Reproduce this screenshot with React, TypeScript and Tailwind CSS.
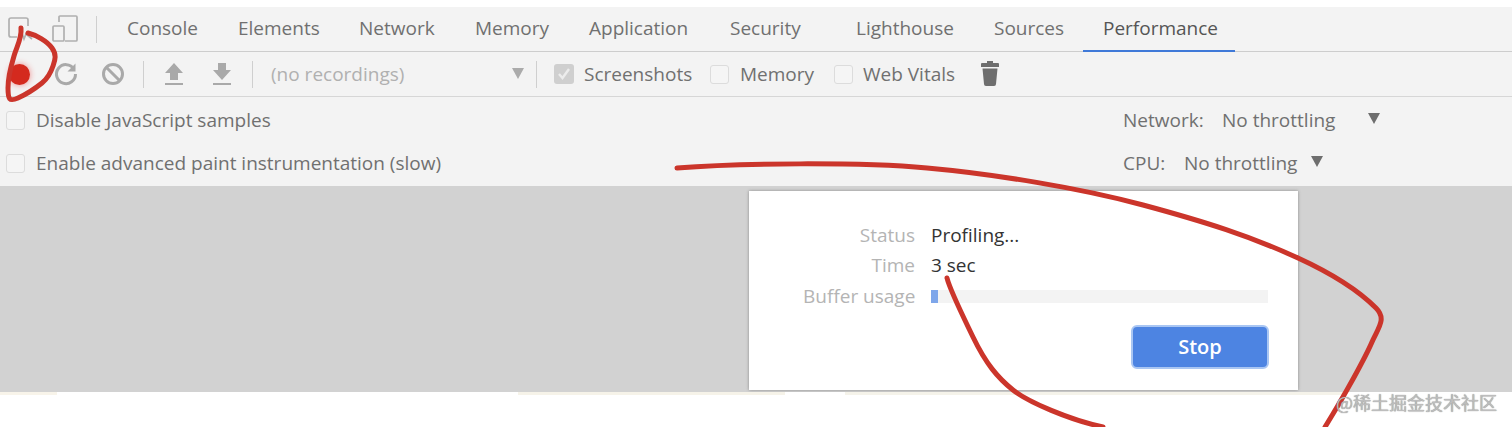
const tabs = [
  { name: "Console", width: "w-[111px]" },
  { name: "Elements", width: "w-[121px]" },
  { name: "Network", width: "w-[116px]" },
  { name: "Memory", width: "w-[114px]" },
  { name: "Application", width: "w-[141px]" },
  { name: "Security", width: "w-[126px]" },
  { name: "Lighthouse", width: "w-[138px]" },
  { name: "Sources", width: "w-[109px]" },
];

function Checkbox() {
  return <span className="block h-[19px] w-[19px] shrink-0 rounded-[3px] border border-[#dcdcdc] bg-[#f5f5f5]" />;
}

function Caret({ className, color = "#6e6e6e" }: { className: string; color?: string }) {
  return (
    <svg width="14" height="11" viewBox="0 0 14 11" className={className}>
      <path d="M1 0h12L7 11z" fill={color} />
    </svg>
  );
}

function Divider({ className }: { className: string }) {
  return <span className={`block h-[27px] w-px shrink-0 bg-[#cfcfcf] ${className}`} />;
}

export default function App() {
  return (
    <div className="relative h-[427px] w-[1512px] overflow-hidden whitespace-nowrap bg-white font-['Open_Sans','Noto_Sans',sans-serif] text-[19px] text-[#707070]">
      <div className="h-[7px] bg-white" />

      {/* Tab bar */}
      <div className="flex h-[45px] items-stretch border-b border-[#cdcdcd] bg-[#f3f3f3]">
        <div className="flex w-[107px] shrink-0 items-center">
          <svg width="30" height="30" viewBox="0 0 30 30" className="ml-[6px]" fill="none" stroke="#b0b0b0" strokeWidth="1.7">
            <path d="M11 23H5a2 2 0 0 1-2-2V6a2 2 0 0 1 2-2h15a2 2 0 0 1 2 2v6" />
            <path d="M14 13l4 12 2-5 6 5" />
          </svg>
          <svg width="30" height="30" viewBox="0 0 30 30" className="ml-[15px]" fill="none" stroke="#b0b0b0" strokeWidth="1.7">
            <path d="M8 8V3a1 1 0 0 1 1-1h16a1 1 0 0 1 1 1v23a1 1 0 0 1-1 1H14" />
            <rect x="2" y="12" width="11" height="15" rx="1" />
          </svg>
          <Divider className="ml-[15px]" />
        </div>
        {tabs.map((tab) => (
          <div key={tab.name} className={`flex shrink-0 items-center pb-[2px] pl-5 ${tab.width}`}>
            {tab.name}
          </div>
        ))}
        <div className="relative -mb-px flex w-[152px] shrink-0 items-center border-b-2 border-[#3f79d8] pl-5 text-[#555555]">
          Performance
        </div>
      </div>

      {/* Recording toolbar */}
      <div className="flex h-[45px] items-center border-b border-[#d6d6d6] bg-[#f3f3f3]">
        <span className="ml-[9px] block h-[21px] w-[21px] shrink-0 rounded-full bg-[#d42a1e] shadow-[0_0_6px_#e88]" />
        <svg width="26" height="26" viewBox="0 0 26 26" className="ml-[23px] shrink-0" fill="none" stroke="#a9a9a9" strokeWidth="3">
          <path d="M21 8a9.5 9.5 0 1 0 1.5 5" />
          <path d="M22.5 2.5v8h-8" fill="#a9a9a9" stroke="none" />
        </svg>
        <svg width="24" height="24" viewBox="0 0 24 24" className="ml-[22px] shrink-0" fill="none" stroke="#a9a9a9" strokeWidth="3">
          <circle cx="12" cy="12" r="9.5" />
          <path d="M5.5 5.5l13 13" />
        </svg>
        <Divider className="ml-[18px]" />
        <svg width="20" height="24" viewBox="0 0 20 24" className="ml-[20px] shrink-0" fill="#a9a9a9">
          <path d="M10 1l9 10h-5v7H6v-7H1z" />
          <path d="M1 21h18v2H1z" />
        </svg>
        <svg width="20" height="24" viewBox="0 0 20 24" className="ml-[28px] shrink-0" fill="#a9a9a9">
          <path d="M6 1h8v7h5l-9 10L1 8h5z" />
          <path d="M1 21h18v2H1z" />
        </svg>
        <Divider className="ml-[20px]" />
        <span className="ml-[18px] w-[240px] shrink-0 text-[#b0b0b0]">(no recordings)</span>
        <Caret className="shrink-0 -translate-y-px" color="#ababab" />
        <Divider className="ml-[11px]" />
        <span className="ml-[17px] flex h-[20px] w-[20px] shrink-0 items-center justify-center rounded-[3px] bg-[#cfcfcf]">
          <svg width="14" height="14" viewBox="0 0 14 14" fill="none" stroke="#ececec" strokeWidth="2.4">
            <path d="M2 7l3.5 4L12 2" />
          </svg>
        </span>
        <span className="ml-[10px] w-[107px] shrink-0">Screenshots</span>
        <span className="ml-[19px] shrink-0"><Checkbox /></span>
        <span className="ml-[11px] w-[75px] shrink-0">Memory</span>
        <span className="ml-[19px] shrink-0"><Checkbox /></span>
        <span className="ml-[10px] w-[94px] shrink-0">Web Vitals</span>
        <svg width="18" height="25" viewBox="0 0 18 25" className="ml-[24px] shrink-0 -translate-y-px" fill="#6e6e6e">
          <path d="M6 0h6v2h5a1 1 0 0 1 1 1v3H0V3a1 1 0 0 1 1-1h5z" />
          <path d="M1.5 7.5h15L15 23a2 2 0 0 1-2 2H5a2 2 0 0 1-2-2z" />
        </svg>
      </div>

      {/* Capture settings */}
      <div className="flex h-[89px] flex-col bg-[#f3f3f3]">
        <div className="flex h-[46px] shrink-0 items-center pl-[6px]">
          <Checkbox />
          <span className="ml-[11px] w-[1087px] shrink-0">Disable JavaScript samples</span>
          <span className="w-[99px] shrink-0">Network:</span>
          <span className="w-[145px] shrink-0">No throttling</span>
          <Caret className="shrink-0 -translate-y-0.5" />
        </div>
        <div className="flex h-[41px] shrink-0 items-center pl-[6px]">
          <Checkbox />
          <span className="ml-[11px] w-[1087px] shrink-0">Enable advanced paint instrumentation (slow)</span>
          <span className="w-[61px] shrink-0">CPU:</span>
          <span className="w-[126px] shrink-0">No throttling</span>
          <Caret className="shrink-0 -translate-y-0.5" />
        </div>
      </div>

      {/* Profiling status */}
      <div className="h-[206px] bg-[#d2d2d2] pl-[749px] pt-[5px]">
        <div className="h-[199px] w-[549px] bg-white pl-[54px] pt-[29px] shadow-[0_0_3px_#8a8a8a]">
          <div className="flex h-[30px] items-center">
            <span className="w-[112px] shrink-0 text-right text-[#b4b4b4]">Status</span>
            <span className="ml-4 text-[#333333]">Profiling...</span>
          </div>
          <div className="flex h-[31px] items-center">
            <span className="w-[112px] shrink-0 text-right text-[#b4b4b4]">Time</span>
            <span className="ml-4 text-[#333333]">3 sec</span>
          </div>
          <div className="flex h-[30px] items-center">
            <span className="w-[112px] shrink-0 text-right text-[#b4b4b4]">Buffer usage</span>
            <div className="ml-4 h-[13px] w-[337px] bg-[#f3f3f3]">
              <div className="h-full w-[7px] bg-[#7ea6ea]" />
            </div>
          </div>
          <div className="mt-[14px] flex justify-end pr-[29px]">
            <button className="flex h-[44px] w-[138px] items-center justify-center rounded-[6px] border-2 border-[#a9c6f3] bg-[#4d84e2] text-[20px] font-semibold text-white">
              Stop
            </button>
          </div>
        </div>
      </div>

      {/* Page peeking out below the panel */}
      <div className="flex h-[3px]">
        <span className="w-[57px] bg-[#f8f4ea]" />
        <span className="w-[461px] bg-white" />
        <span className="w-[267px] bg-[#f6f3e9]" />
        <span className="w-[60px] bg-white" />
        <span className="w-[500px] bg-[#f5f3ea]" />
      </div>

      {/* Hand-drawn annotations */}
      <svg width="1512" height="427" viewBox="0 0 1512 427" className="pointer-events-none absolute inset-0" fill="none" stroke="#cb352b" strokeLinecap="round" strokeLinejoin="round" strokeWidth="5">
        <path d="M28 33C36 35 47 41 52 48S55 60 53 66S47 79 42 83S27 94 18 98S8 99 8 88S11 66 14 56S22 38 21 28" />
        <path d="M677 168C740 163 860 162 927 168S1080 188 1143 205S1250 236 1298 258S1365 297 1376 308S1378 328 1372 342S1345 395 1325 427" />
        <path d="M947 278C950 290 960 310 973 337S998 378 1013 390S1070 420 1103 427" />
      </svg>

      {/* Watermark */}
      <span className="absolute left-[1336px] top-[389px] font-['Noto_Sans_CJK_SC','Noto_Sans',sans-serif] text-[18px] text-[#bdbdbd] [text-shadow:0_0_1px_#777]">
        @稀土掘金技术社区
      </span>
    </div>
  );
}
